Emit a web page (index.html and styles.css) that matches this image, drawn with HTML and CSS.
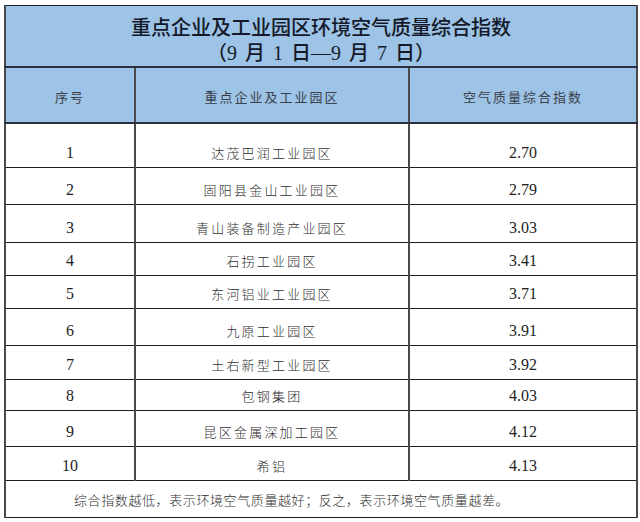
FILE: index.html
```html
<!DOCTYPE html>
<html lang="zh-CN">
<head>
<meta charset="utf-8">
<title>重点企业及工业园区环境空气质量综合指数</title>
<link rel="stylesheet" href="styles.css">
</head>
<body>
<div class="sheet">
<table class="aqi">
  <colgroup>
    <col class="c-no">
    <col class="c-name">
    <col class="c-val">
  </colgroup>
  <tr class="title">
    <td colspan="3">
      <div class="t1">重点企业及工业园区环境空气质量综合指数</div>
      <div class="t2">（9 月 1 日—9 月 7 日）</div>
    </td>
  </tr>
  <tr class="head">
    <th>序号</th>
    <th>重点企业及工业园区</th>
    <th>空气质量综合指数</th>
  </tr>
  <tr class="row r1"><td class="num">1</td><td class="name">达茂巴润工业园区</td><td class="num">2.70</td></tr>
  <tr class="row r2"><td class="num">2</td><td class="name">固阳县金山工业园区</td><td class="num">2.79</td></tr>
  <tr class="row r3"><td class="num">3</td><td class="name">青山装备制造产业园区</td><td class="num">3.03</td></tr>
  <tr class="row r4"><td class="num">4</td><td class="name">石拐工业园区</td><td class="num">3.41</td></tr>
  <tr class="row r5"><td class="num">5</td><td class="name">东河铝业工业园区</td><td class="num">3.71</td></tr>
  <tr class="row r6"><td class="num">6</td><td class="name">九原工业园区</td><td class="num">3.91</td></tr>
  <tr class="row r7"><td class="num">7</td><td class="name">土右新型工业园区</td><td class="num">3.92</td></tr>
  <tr class="row r8"><td class="num">8</td><td class="name">包钢集团</td><td class="num">4.03</td></tr>
  <tr class="row r9"><td class="num">9</td><td class="name">昆区金属深加工园区</td><td class="num">4.12</td></tr>
  <tr class="row r10"><td class="num">10</td><td class="name">希铝</td><td class="num">4.13</td></tr>
  <tr class="note">
    <td colspan="3">综合指数越低，表示环境空气质量越好；反之，表示环境空气质量越差。</td>
  </tr>
</table>
</div>
</body>
</html>
```
FILE: styles.css
```css
html, body {
  margin: 0;
  padding: 0;
  background: #ffffff;
}

.sheet {
  padding: 5px 4px 0 4px;
}

.aqi {
  width: 632px;
  border-collapse: collapse;
  table-layout: fixed;
  border: 1px solid #1c2233;
  font-family: "Noto Sans CJK SC", sans-serif;
}

.c-no { width: 130px; }
.c-name { width: 274px; }
.c-val { width: 228px; }

.aqi td, .aqi th {
  box-sizing: border-box;
  padding: 0;
  border-top: 1px solid #1e1e1e;
  border-bottom: 1px solid #1e1e1e;
  border-left: 2px solid #4a4a4a;
  border-right: 2px solid #4a4a4a;
  text-align: center;
}

.title td {
  background: #9dc3e6;
  height: 60px;
  vertical-align: top;
  padding-top: 8px;
  color: #151a2a;
  font-weight: 500;
  font-size: 20px;
  line-height: 26px;
  border-bottom: 2px solid #2a3040;
}

.t2 {
  font-family: "Liberation Serif", "Noto Sans CJK SC", serif;
  font-size: 20px;
  word-spacing: 3px;
}

.head th {
  background: #9dc3e6;
  height: 56px;
  font-weight: 400;
  font-size: 13px;
  letter-spacing: 2px;
  color: #3a3f4a;
  vertical-align: middle;
  padding-top: 2px;
  border-bottom: 2px solid #2a3040;
}

.row td {
  vertical-align: bottom;
  padding-bottom: 5px;
  line-height: 18px;
}

.row .num {
  font-family: "Liberation Serif", serif;
  font-size: 16px;
  color: #1e1e1e;
}

.row .name {
  font-size: 13px;
  letter-spacing: 2.2px;
  font-weight: 300;
  color: #2e2e2e;
}

.r1 td { height: 44px; }
.r2 td { height: 37px; }
.r3 td { height: 38px; }
.r4 td { height: 33px; }
.r5 td { height: 33px; }
.r6 td { height: 37px; }
.r7 td { height: 34px; }
.r8 td { height: 31px; }
.r9 td { height: 36px; }
.r10 td { height: 34px; }

.note td {
  height: 37px;
  text-align: left;
  padding-left: 68px;
  padding-top: 2px;
  font-size: 13px;
  letter-spacing: 0.6px;
  font-weight: 300;
  color: #2e2e2e;
  vertical-align: middle;
}
```
